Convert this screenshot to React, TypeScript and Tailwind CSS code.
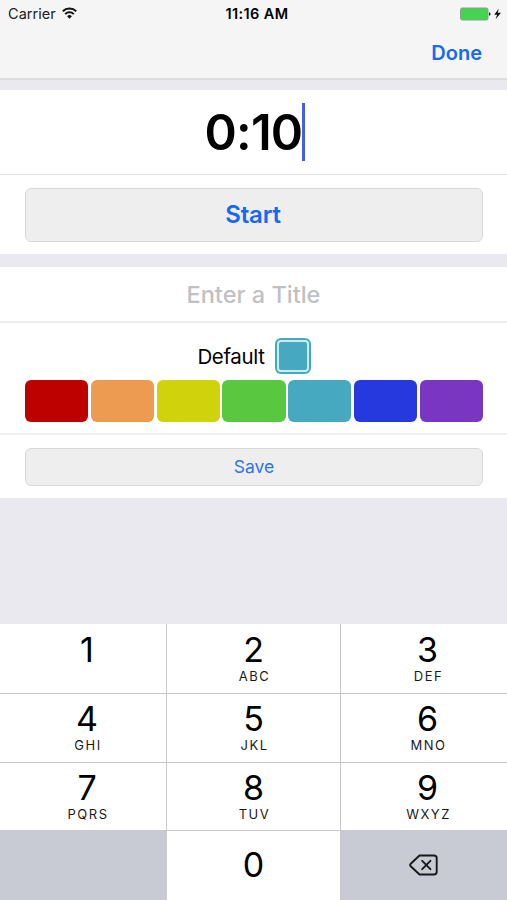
import { useState } from "react";

const COLORS = [
  { name: "red", value: "bg-[#bd0000]" },
  { name: "orange", value: "bg-[#ed9b50]" },
  { name: "yellow", value: "bg-[#d0d30b]" },
  { name: "green", value: "bg-[#59c740]" },
  { name: "teal", value: "bg-[#46a9c0]" },
  { name: "blue", value: "bg-[#2639df]" },
  { name: "purple", value: "bg-[#7836c1]" },
];

const KEY_ROWS = [
  { pad: "pt-[8px]", keys: [["1", ""], ["2", "ABC"], ["3", "DEF"]] },
  { pad: "pt-[7px]", keys: [["4", "GHI"], ["5", "JKL"], ["6", "MNO"]] },
  { pad: "pt-[7px]", keys: [["7", "PQRS"], ["8", "TUV"], ["9", "WXYZ"]] },
];

// the outer columns sit slightly right of centre
const COLUMN_PAD = ["pl-[8px]", "pl-0", "pl-[7px]"];

function StatusBar() {
  return (
    <div className="grid h-7 grid-cols-3 items-center pl-2 pr-[5px] text-[14.5px] text-[#222]">
      <div className="flex items-center gap-[6px]">
        <span className="tracking-[0.05px]">Carrier</span>
        <svg width="15" height="12" viewBox="0 0 15 12" className="-mt-[2px]" fill="none" stroke="#111" strokeWidth="2">
          <path d="M0.8 4.3a9.5 9.5 0 0 1 13.4 0" />
          <path d="M3.2 7.1a6.1 6.1 0 0 1 8.6 0" />
          <path d="M7.5 11.7 5.1 9.2a3.4 3.4 0 0 1 4.8 0Z" fill="#111" stroke="none" />
        </svg>
      </div>
      <span className="pl-[4px] text-center text-[14.5px] font-semibold tracking-[0.4px] whitespace-nowrap text-black">
        11:16 AM
      </span>
      <div className="flex items-center justify-end">
        <svg width="42" height="14" viewBox="0 0 42 14">
          <rect x="0.5" y="1" width="27.5" height="12" rx="1.8" fill="#43d551" stroke="#8f9c91" />
          <path d="M29 5.2c2 .3 2 3.3 0 3.6Z" fill="#222" />
          <path d="M38.7 1.8 34.2 7.7h2.9l-1.5 4.6 5.4-6.5h-3.2Z" fill="#111" />
        </svg>
      </div>
    </div>
  );
}

function Key({ digit, letters, className }: { digit: string; letters: string; className: string }) {
  return (
    <button className={`${className} flex flex-col items-center bg-white`}>
      <span className="text-[34px] leading-9">{digit}</span>
      <span className="pl-[2px] text-[13px] leading-4 tracking-[1.5px] text-[#1a1a1a]">{letters}</span>
    </button>
  );
}

export default function App() {
  const [selected, setSelected] = useState(COLORS[4]);

  return (
    <div className="flex h-[900px] w-[507px] flex-col overflow-hidden bg-[#eae9ef] font-['Inter',sans-serif] text-black">
      <header className="h-[80px] border-b-2 border-[#dcdcdf] bg-[#f5f5f5]">
        <StatusBar />
        <div className="flex h-[49px] items-center justify-end pr-[25px]">
          <button className="text-[20px] font-semibold text-[#1668f5]">Done</button>
        </div>
      </header>

      {/* Timer */}
      <section className="mt-[10px] h-[164px] bg-white">
        <div className="flex h-[85px] items-center justify-center border-b border-[#e2e2e4] pl-[3px]">
          <span className="pt-[2px] text-[49px] font-semibold tracking-[-0.8px]">0:10</span>
          <span className="h-[58px] w-[3px] bg-[#4760df]" />
        </div>
        <div className="pt-[13px] pr-[24px] pl-[25px]">
          <button className="h-[54px] w-full rounded-md border border-[#d9d9d9] bg-[#eee] pr-[2px] text-[24px] font-semibold tracking-[-0.2px] text-[#1668f5]">
            Start
          </button>
        </div>
      </section>

      {/* Title and colour */}
      <section className="mt-[13px] h-[231px] bg-white">
        <div className="flex h-[56px] items-center justify-center border-b-2 border-[#eeeef0] pt-[1px] text-[23.5px] font-medium text-[#bfbfc4]">
          Enter a Title
        </div>
        <div className="h-[112px] border-b-2 border-[#f1f1f2] pt-[15px] pr-[24px] pl-[25px]">
          <div className="flex h-[36px] items-center justify-center gap-[10px]">
            <span className="pt-[2px] text-[20.5px] tracking-[-0.35px]">Default</span>
            <div className={`${selected.value} size-9 rounded-md p-[2px]`}>
              <div className="size-full rounded-[4px] border-2 border-[#c9ebf2]" />
            </div>
          </div>
          <div className="mt-[6px] flex gap-[2.5px]">
            {COLORS.map((c) => (
              <button
                key={c.name}
                aria-label={c.name}
                onClick={() => setSelected(c)}
                className={`${c.value} h-[42px] flex-1 rounded-md`}
              />
            ))}
          </div>
        </div>
        <div className="pt-[13px] pr-[24px] pl-[25px]">
          <button className="h-[38px] w-full rounded-md border border-[#d9d9d9] bg-[#eee] pt-[1px] text-[17.5px] text-[#2f73ee]">
            Save
          </button>
        </div>
      </section>

      {/* Number pad */}
      <section className="mt-auto grid h-[276px] grid-cols-[166px_173px_166px] grid-rows-[69px_68px_67px_69px] gap-x-px gap-y-px bg-[#c9c9cb]">
        {KEY_ROWS.map((row) =>
          row.keys.map(([digit, letters], col) => (
            <Key key={digit} digit={digit} letters={letters} className={`${row.pad} ${COLUMN_PAD[col]}`} />
          ))
        )}
        <div className="bg-[#c8cbd3]" />
        <button className="flex items-center justify-center bg-white pb-[2px] text-[34px]">0</button>
        <button className="flex items-center justify-center bg-[#c8cbd3] pr-[1px] pb-[2px]" aria-label="Delete">
          <svg width="29" height="22" viewBox="0 0 29 22" fill="none" stroke="#17181b" strokeWidth="1.9" strokeLinejoin="round" strokeLinecap="round">
            <path d="M10.5 1.5H25a2.7 2.7 0 0 1 2.7 2.7v13.6a2.7 2.7 0 0 1-2.7 2.7H10.5L1.7 12.2a1.7 1.7 0 0 1 0-2.4Z" />
            <path d="m13.2 6.8 8.2 8.4m0-8.4-8.2 8.4" />
          </svg>
        </button>
      </section>
    </div>
  );
}
